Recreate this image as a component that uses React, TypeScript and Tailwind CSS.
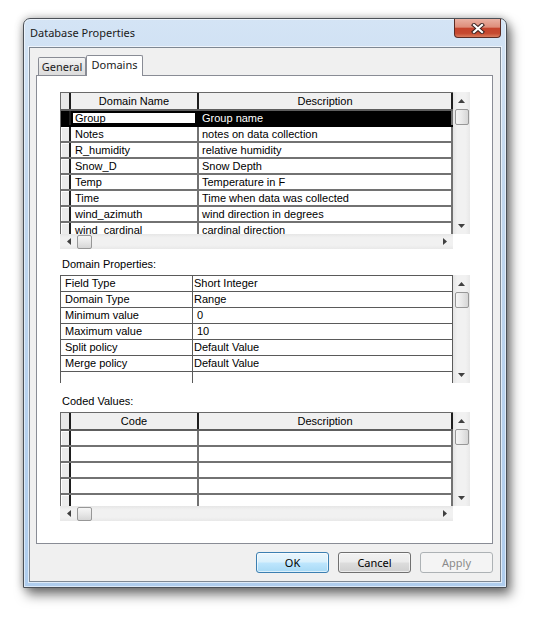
import React from 'react'

const ui = "font-['Noto_Sans','Segoe_UI',sans-serif]"
const gridFont = "font-['Liberation_Sans',Arial,sans-serif]"

type Dir = 'up' | 'down' | 'left' | 'right'

function Arrow({ dir }: { dir: Dir }) {
  const vertical = dir === 'up' || dir === 'down'
  const points = {
    up: '0,4 3.5,0 7,4',
    down: '0,0 7,0 3.5,4',
    left: '4,0 4,7 0,3.5',
    right: '0,0 4,3.5 0,7',
  }[dir]
  return (
    <svg width={vertical ? 7 : 4} height={vertical ? 4 : 7} viewBox={vertical ? '0 0 7 4' : '0 0 4 7'}>
      <polygon points={points} fill="#404040" />
    </svg>
  )
}

function VScroll({ className }: { className: string }) {
  return (
    <div className={`flex w-[17px] flex-col bg-[linear-gradient(90deg,#e4e4e4,#f1f1f1_25%,#f1f1f1_75%,#e8e8e8)] ${className}`}>
      <div className="flex h-[17px] items-center justify-center">
        <Arrow dir="up" />
      </div>
      <div className="ml-[2px] h-[16px] w-[14px] rounded-[2px] border border-[#979797] bg-[linear-gradient(90deg,#f6f6f6,#e8e8e8_50%,#d6d6d6)]" />
      <div className="flex-1" />
      <div className="flex h-[17px] items-center justify-center">
        <Arrow dir="down" />
      </div>
    </div>
  )
}

function HScroll() {
  return (
    <div className="flex h-[15px] w-[393px] items-center bg-[linear-gradient(180deg,#e6e6e6,#f1f1f1_25%,#f1f1f1_75%,#e8e8e8)]">
      <div className="flex w-[17px] items-center justify-center">
        <Arrow dir="left" />
      </div>
      <div className="h-[14px] w-[15px] rounded-[2px] border border-[#979797] bg-[linear-gradient(180deg,#f6f6f6,#e8e8e8_50%,#d6d6d6)]" />
      <div className="flex-1" />
      <div className="flex w-[17px] items-center justify-center">
        <Arrow dir="right" />
      </div>
    </div>
  )
}

const domains = [
  ['Group', 'Group name'],
  ['Notes', 'notes on data collection'],
  ['R_humidity', 'relative humidity'],
  ['Snow_D', 'Snow Depth'],
  ['Temp', 'Temperature in F'],
  ['Time', 'Time when data was collected'],
  ['wind_azimuth', 'wind direction in degrees'],
  ['wind_cardinal', 'cardinal direction'],
]

const properties: [string, string, boolean][] = [
  ['Field Type', 'Short Integer', false],
  ['Domain Type', 'Range', false],
  ['Minimum value', '0', true],
  ['Maximum value', '10', true],
  ['Split policy', 'Default Value', false],
  ['Merge policy', 'Default Value', false],
]

function GridHeader({ first }: { first: string }) {
  return (
    <div className="flex h-[18px] border-b-2 border-[#5e5e5e] bg-[#f0f0f0] leading-[16px]">
      <div className="w-[10px] border-r-2 border-[#1e1e1e] bg-[#e9e9e9]" />
      <div className="w-[128px] border-r-2 border-[#1e1e1e] text-center">{first}</div>
      <div className="flex-1 border-r-2 border-[#1e1e1e] text-center">Description</div>
    </div>
  )
}

function GridRow({ name, desc, selected }: { name: string; desc: string; selected?: boolean }) {
  return (
    <div className={`flex h-[16px] shrink-0 border-b-2 leading-[14px] ${selected ? 'border-black' : 'border-[#727272]'}`}>
      <div
        className={`w-[10px] border-r-2 border-[#1e1e1e] ${selected ? 'bg-black' : 'bg-[#ececec] shadow-[inset_1px_1px_0_#ffffff]'}`}
      />
      <div
        className={`w-[128px] border-r-2 pl-[4px] ${selected ? 'border-black shadow-[inset_0_0_0_2px_#000]' : 'border-[#727272]'}`}
      >
        {name}
      </div>
      <div className={`flex-1 border-r-2 border-[#727272] pl-[3px] ${selected ? 'bg-black text-white' : ''}`}>{desc}</div>
    </div>
  )
}

function DomainGrid() {
  return (
    <div className="flex h-[157px] w-[410px]">
      <div className="flex w-[393px] flex-col">
        <div className="h-[142px] overflow-hidden border-l border-t border-[#6a6a6a] bg-white">
          <GridHeader first="Domain Name" />
          {domains.map(([n, d], i) => (
            <GridRow key={n} name={n} desc={d} selected={i === 0} />
          ))}
        </div>
        <HScroll />
      </div>
      <VScroll className="h-[142px]" />
    </div>
  )
}

function PropertiesGrid() {
  return (
    <div className="flex h-[108px] w-[410px]">
      <div className="h-[108px] w-[393px] overflow-hidden border-l border-t border-[#5a5a5a] bg-white">
        {properties.map(([k, v, indent]) => (
          <div key={k} className="flex h-[16px] border-b border-[#5a5a5a] leading-[15px]">
            <div className="w-[132px] border-r border-[#5a5a5a] pl-[4px]">{k}</div>
            <div className={`flex-1 border-r border-[#5a5a5a] ${indent ? 'pl-[4px]' : 'pl-[1px]'}`}>{v}</div>
          </div>
        ))}
        <div className="flex h-[16px]">
          <div className="w-[132px] border-r border-[#5a5a5a]" />
          <div className="flex-1 border-r border-[#5a5a5a]" />
        </div>
      </div>
      <VScroll className="h-[108px]" />
    </div>
  )
}

function CodedGrid() {
  return (
    <div className="flex h-[109px] w-[410px]">
      <div className="flex w-[393px] flex-col">
        <div className="h-[94px] overflow-hidden border-l border-t border-[#6a6a6a] bg-white">
          <GridHeader first="Code" />
          {[0, 1, 2, 3, 4].map((i) => (
            <GridRow key={i} name="" desc="" />
          ))}
        </div>
        <HScroll />
      </div>
      <VScroll className="h-[94px]" />
    </div>
  )
}

export default function App() {
  return (
    <div className="h-[618px] w-[536px] bg-white pl-[23px] pt-[18px]">
      <div className="flex h-[570px] w-[484px] flex-col rounded-t-[7px] border border-[#4b5057] bg-[linear-gradient(180deg,#d4e4f5,#c2d8ef_30%,#afcdee)] shadow-[inset_0_0_0_1px_rgba(255,255,255,0.55),0_0_8px_rgba(0,0,0,0.3),4px_7px_12px_rgba(0,0,0,0.5)]">
        {/* title bar */}
        <div className="flex h-[28px] items-start justify-between">
          <div className={`${ui} pl-[6px] pt-[6px] text-[11px] leading-[16px] text-[#1a1a1a]`}>Database Properties</div>
          <div className="mr-[5px] flex h-[19px] w-[47px] items-center justify-center rounded-b-[4px] border border-t-0 border-[#5b2b24] bg-[linear-gradient(180deg,#eab0a2_0%,#de8d7a_45%,#c5432c_52%,#c64a31_80%,#da7c5e_100%)]">
            <svg width="14" height="11" viewBox="0 0 14 11">
              <path d="M3 2 L11 9 M11 2 L3 9" stroke="#3d2422" strokeWidth="4.2" strokeLinecap="square" />
              <path d="M3 2 L11 9 M11 2 L3 9" stroke="#ffffff" strokeWidth="2.2" strokeLinecap="square" />
            </svg>
          </div>
        </div>

        {/* client area */}
        <div className="mx-[5px] flex h-[535px] flex-col border border-[#7e8792] bg-[#f0f0f0] pl-[6px] pr-[7px] pt-[7px] shadow-[0_0_0_1px_rgba(255,255,255,0.6)]">
          <div className={`${ui} flex h-[20px] items-end text-[11px] text-[#1a1a1a]`}>
            <div className="ml-[2px] flex h-[18px] w-[48px] items-center justify-center rounded-t-[2px] border border-b-0 border-[#898c95] bg-[linear-gradient(180deg,#f4f4f4,#e6e6e6_50%,#dcdcdc)] pt-[1px] leading-[16px]">
              General
            </div>
            <div className="relative z-10 -mb-px flex h-[21px] w-[57px] items-start justify-center rounded-t-[2px] border border-b-0 border-[#898c95] bg-white pt-[1px] leading-[16px]">
              Domains
            </div>
          </div>

          <div className={`${gridFont} flex h-[469px] flex-col border border-[#898c95] bg-white pl-[23px] pt-[16px] text-[11px] text-black`}>
            <DomainGrid />
            <div className="ml-[2px] mt-[8px] h-[14px] leading-[14px]">Domain Properties:</div>
            <div className="mt-[4px]">
              <PropertiesGrid />
            </div>
            <div className="ml-[2px] mt-[11px] h-[14px] leading-[14px]">Coded Values:</div>
            <div className="mt-[4px]">
              <CodedGrid />
            </div>
          </div>

          <div className={`${ui} mt-[8px] flex justify-end gap-[9px] text-[11px]`}>
            <button className="h-[21px] w-[73px] rounded-[3px] border border-[#3c7fb1] bg-[linear-gradient(180deg,#eaf6fd_0%,#d9f0fc_48%,#bee6fd_52%,#a7d9f5_100%)] leading-[18px] text-black shadow-[inset_0_0_0_1px_rgba(255,255,255,0.6)]">
              OK
            </button>
            <button className="h-[21px] w-[73px] rounded-[3px] border border-[#707070] bg-[linear-gradient(180deg,#f2f2f2_0%,#ebebeb_48%,#dddddd_52%,#cfcfcf_100%)] leading-[18px] text-black shadow-[inset_0_0_0_1px_rgba(255,255,255,0.6)]">
              Cancel
            </button>
            <button className="h-[21px] w-[73px] rounded-[3px] border border-[#adb2b5] bg-[#f4f4f4] leading-[18px] text-[#8a8a8a]">
              Apply
            </button>
          </div>
        </div>
      </div>
    </div>
  )
}
